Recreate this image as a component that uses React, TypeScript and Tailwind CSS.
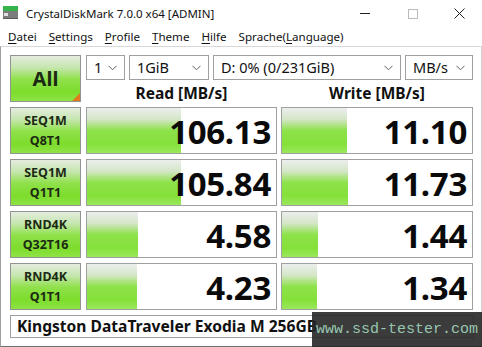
import React from 'react'

const rows = [
  { l1: 'SEQ1M', l2: 'Q8T1', read: '106.13', rw: 94, write: '11.10', ww: 65 },
  { l1: 'SEQ1M', l2: 'Q1T1', read: '105.84', rw: 94, write: '11.73', ww: 66 },
  { l1: 'RND4K', l2: 'Q32T16', read: '4.58', rw: 51, write: '1.44', ww: 36 },
  { l1: 'RND4K', l2: 'Q1T1', read: '4.23', rw: 50, write: '1.34', ww: 35 },
]

const btnBg =
  'bg-[linear-gradient(to_bottom,#e4ecdf_0%,#c6e6b0_25%,#8fe14a_52%,#7ddc2c_80%,#8ee344_100%)]'
const barBg =
  'bg-[linear-gradient(to_bottom,#eceeec_0%,#d4e6c8_25%,#8ee24a_50%,#84e03a_80%,#9be85c_100%)]'

function Chevron() {
  return (
    <svg width="9" height="6" viewBox="0 0 9 6" className="shrink-0">
      <path d="M0.5 0.8 L4.5 4.8 L8.5 0.8" fill="none" stroke="#606060" strokeWidth="1" />
    </svg>
  )
}

function Select({ w, label }: { w: string; label: string }) {
  return (
    <div className={`${w} h-[25px] border border-[#a0a0a0] bg-white flex items-center justify-between pl-[7px] pr-[7px]`}>
      <span className="text-[14.5px] text-[#111] leading-none">{label}</span>
      <Chevron />
    </div>
  )
}

function Menu({ first, rest }: { first: string; rest: string }) {
  return (
    <span>
      <span className="underline underline-offset-2 decoration-1">{first}</span>
      {rest}
    </span>
  )
}

function ResultBox({ value, bar, w }: { value: string; bar: number; w: string }) {
  return (
    <div className={`relative ${w} h-[47px] border border-[#a0a0a0] bg-white`}>
      <div className={`absolute left-0 top-0 bottom-0 ${barBg}`} style={{ width: bar }} />
      <div className="relative h-full flex items-center justify-end pr-[5px] pt-[2px]">
        <span className="text-[33px] font-bold text-[#0a0a0a] leading-none tracking-[-0.3px]">{value}</span>
      </div>
    </div>
  )
}

export default function App() {
  return (
    <div className="relative w-[482px] h-[347px] bg-white overflow-hidden font-['Noto_Sans',sans-serif] text-[#111]">
      {/* title bar */}
      <div className="h-[27px] flex items-center">
        <svg width="16" height="14" viewBox="0 0 16 14" className="ml-[3px] mt-[-1px]">
          <rect x="0" y="0" width="15" height="5" fill="#34b44a" />
          <rect x="0" y="5" width="15" height="8" fill="#7c7c7c" />
          <rect x="1" y="7" width="4" height="3" fill="#e0e0e0" />
          <rect x="0" y="12" width="15" height="1" fill="#5a5a5a" />
        </svg>
        <span className="ml-[7px] text-[11.5px] leading-none text-[#111]">CrystalDiskMark 7.0.0 x64 [ADMIN]</span>
        <div className="ml-auto flex items-center h-full">
          <div className="w-[46px] h-full flex items-center justify-center">
            <div className="w-[10px] h-px bg-[#222] ml-[-4px]" />
          </div>
          <div className="w-[46px] h-full flex items-center justify-center">
            <div className="w-[10px] h-[10px] border border-[#bbb]" />
          </div>
          <div className="w-[46px] h-full flex items-center justify-center">
            <svg width="11" height="11" viewBox="0 0 11 11">
              <path d="M0.5 0.5 L10.5 10.5 M10.5 0.5 L0.5 10.5" stroke="#222" strokeWidth="1" />
            </svg>
          </div>
        </div>
      </div>

      {/* menu bar */}
      <div className="h-[19px] flex items-center gap-[12px] pl-[8px] text-[11.6px] leading-none text-[#111]">
        <Menu first="D" rest="atei" />
        <Menu first="S" rest="ettings" />
        <Menu first="P" rest="rofile" />
        <Menu first="T" rest="heme" />
        <Menu first="H" rest="ilfe" />
        <span>
          Sprache(<span className="underline underline-offset-2 decoration-1">L</span>anguage)
        </span>
      </div>

      {/* client area */}
      <div className="h-[301px] border-t border-l border-r border-b border-t-[#d8d8d8] border-l-[#a0a0a0] border-r-[#d0d0d0] border-b-[#707070] pl-[9px] pt-[8px]">
        <div className="flex">
          <div className={`relative w-[71px] h-[47px] border border-[#939393] ${btnBg} flex items-center justify-center`}>
            <span className="text-[20px] font-bold text-[#1c2a14] leading-none">All</span>
            <div className="absolute right-0 bottom-0 w-0 h-0 border-l-[8px] border-l-transparent border-b-[8px] border-b-[#e07a1e]" />
          </div>
          <div className="ml-[5px] flex flex-col">
            <div className="flex gap-[4px]">
              <Select w="w-[39px]" label="1" />
              <Select w="w-[80px]" label="1GiB" />
              <Select w="w-[188px]" label="D: 0% (0/231GiB)" />
              <Select w="w-[68px]" label="MB/s" />
            </div>
            <div className="h-[27px] flex items-center text-[15.5px] font-bold text-[#111] leading-none">
              <div className="w-[191px] text-center">Read [MB/s]</div>
              <div className="ml-[4px] w-[192px] text-center">Write [MB/s]</div>
            </div>
          </div>
        </div>

        <div className="flex flex-col gap-[5px]">
          {rows.map((r, i) => (
            <div key={i} className="flex">
              <div className={`w-[71px] h-[47px] border border-[#939393] ${btnBg} flex flex-col items-center justify-center`}>
                <span className="text-[12.5px] font-bold text-[#1c2a14] leading-[20px]">{r.l1}</span>
                <span className="text-[12.5px] font-bold text-[#1c2a14] leading-[20px]">{r.l2}</span>
              </div>
              <div className="ml-[5px]">
                <ResultBox value={r.read} bar={r.rw} w="w-[191px]" />
              </div>
              <div className="ml-[4px]">
                <ResultBox value={r.write} bar={r.ww} w="w-[192px]" />
              </div>
            </div>
          ))}
          <div className="w-[464px] h-[23px] border border-[#a0a0a0] bg-white flex items-center pl-[6px]">
            <span className="text-[15.6px] font-bold text-[#111] leading-none whitespace-nowrap">Kingston DataTraveler Exodia M 256GB</span>
          </div>
        </div>
      </div>

      {/* watermark */}
      <div className="absolute left-[312px] top-[312px] w-[170px] h-[35px] bg-[#262626]/90 flex items-center justify-end pr-[4px]">
        <span className="font-['Liberation_Mono',monospace] text-[15px] text-[#97c6b0] leading-none">www.ssd-tester.com</span>
      </div>
    </div>
  )
}
